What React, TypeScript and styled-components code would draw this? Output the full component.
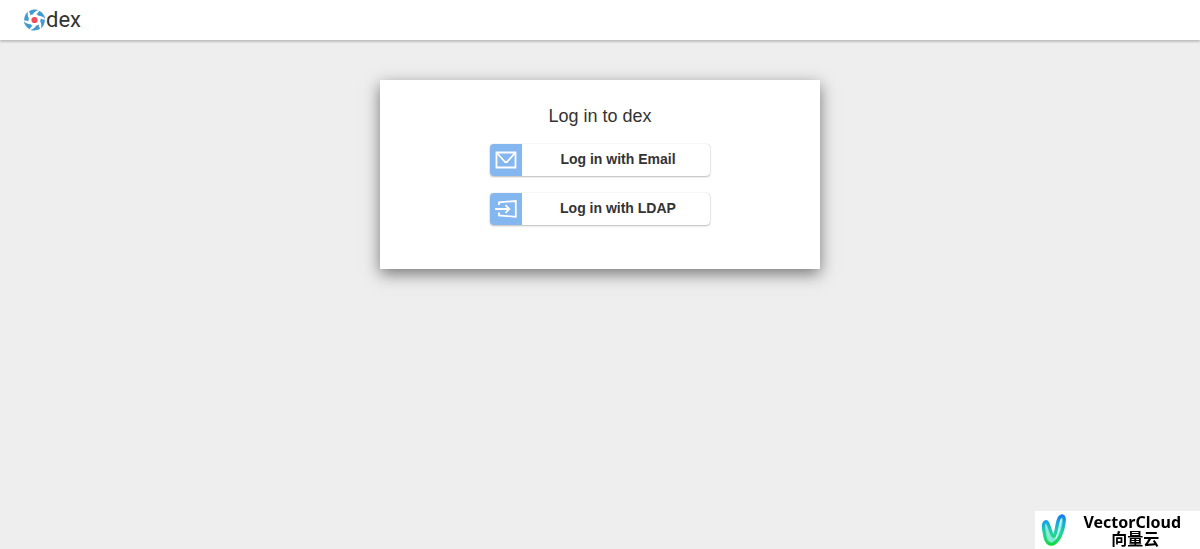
import React from "react";
import styled, { createGlobalStyle } from "styled-components";

const GlobalStyle = createGlobalStyle`
  * { box-sizing: border-box; }
  body {
    margin: 0;
    background: #eeeeee;
    color: #333333;
    font-family: "Liberation Sans", Arial, sans-serif;
  }
`;

const Page = styled.div`
  min-height: 100vh;
  display: flex;
  flex-direction: column;
`;

const Navbar = styled.header`
  height: 40px;
  padding: 0 24px;
  display: flex;
  align-items: center;
  background: #ffffff;
  box-shadow: 0 2px 2px rgba(0, 0, 0, 0.2);
`;

const Brand = styled.a`
  display: flex;
  align-items: center;
  gap: 1px;
  color: #333333;
  font: 400 22px/32px Roboto, sans-serif;
  text-decoration: none;
`;

const Main = styled.main`
  flex: 1;
  padding: 40px 16px;
`;

const Panel = styled.section`
  max-width: 440px;
  margin: 0 auto;
  padding: 24px 32px 44px;
  display: flex;
  flex-direction: column;
  align-items: center;
  background: #ffffff;
  box-shadow: 0 5px 15px rgba(0, 0, 0, 0.5);
`;

const Heading = styled.h1`
  margin: 0 0 16px;
  font-size: 18px;
  line-height: 24px;
  font-weight: 400;
`;

const Connectors = styled.div`
  width: 220px;
  display: flex;
  flex-direction: column;
  gap: 17px;
`;

const ConnectorButton = styled.button`
  height: 32px;
  padding: 0;
  display: flex;
  align-items: stretch;
  overflow: hidden;
  border: 0;
  border-radius: 4px;
  background: #ffffff;
  box-shadow: 0 1px 2px rgba(0, 0, 0, 0.25), 0 0 1px rgba(0, 0, 0, 0.25);
  color: #333333;
  cursor: pointer;
`;

const IconBox = styled.span`
  width: 32px;
  display: flex;
  align-items: center;
  justify-content: center;
  background: #84b6ef;
`;

const Label = styled.span`
  flex: 1;
  padding-left: 4px;
  font: 700 14px/30px "Liberation Sans", Arial, sans-serif;
  text-align: center;
`;

const Watermark = styled.aside`
  position: fixed;
  right: 0;
  bottom: 0;
  height: 38px;
  padding: 0 19px 0 5px;
  display: flex;
  align-items: center;
  gap: 14px;
  background: #ffffff;
  color: #000000;
`;

const WatermarkText = styled.div`
  font: 700 16px/16px "Noto Sans", "Noto Sans CJK SC", sans-serif;
  text-align: center;
`;

const ChineseName = styled.div`
  padding-left: 6px;
  font-family: "Noto Sans CJK SC", sans-serif;
`;

const DexMark = () => (
  <svg width="21" height="22" viewBox="0 0 21 22" aria-hidden="true">
    <g fill="#419bd1">
      {[0, 60, 120, 180, 240, 300].map((angle) => (
        <path
          key={angle}
          transform={`rotate(${angle} 10.5 11)`}
          d="M4.900 2.400C7.700 .2 12 0 14.700 1.100C11.900 2 9.900 3.400 8.800 5.500C7.800 5.600 7 6 6.400 6.500C6.300 4.900 5.800 3.500 4.900 2.400Z"
        />
      ))}
    </g>
    <circle cx="10.5" cy="11" r="3.1" fill="#f04d5c" />
  </svg>
);

const EmailIcon = () => (
  <svg width="22" height="18" viewBox="0 0 22 18" fill="none" stroke="#fff" strokeWidth="1.8" aria-hidden="true">
    <path d="M1.5 1.5H20.5V16.5H1.5Z" />
    <path d="M2 2L9.500 10.500Q11 12 12.500 10.500L20 2" />
  </svg>
);

const LdapIcon = () => (
  <svg width="22" height="18" viewBox="0 0 22 18" fill="none" stroke="#fff" strokeWidth="1.8" aria-hidden="true">
    <path d="M4 5V2.300L20.800 1V16.800L4 15.500V12.500" />
    <path d="M0 9H14M10.500 5.200L14.300 9L10.500 12.800" />
  </svg>
);

const VectorMark = () => (
  <svg width="29" height="36" viewBox="0 0 29 36" fill="none" aria-hidden="true">
    <defs>
      <linearGradient id="vector" x1="0" y1="2" x2="0" y2="34" gradientUnits="userSpaceOnUse">
        <stop offset="0" stopColor="#1672f0" />
        <stop offset="0.25" stopColor="#16a5e4" />
        <stop offset="0.6" stopColor="#20d2a0" />
        <stop offset="1" stopColor="#12dc32" />
      </linearGradient>
    </defs>
    <path
      d="M13 32C9 33 6 30 5 25C4 19 2 12 5 10C8 8 9 15 11 20C12 23 14 26 15 23C17 16 17 8 20 5C23 2 25 5 24 11C23 20 19 29 13 32Z"
      fill="#7be9d0"
      stroke="url(#vector)"
      strokeWidth="3.2"
      strokeLinejoin="round"
    />
    <path d="M21 8C20 15 19 20 16 26" stroke="#c4f5f2" strokeWidth="1.5" strokeLinecap="round" />
    <path d="M6 14C7 20 9 25 11 28" stroke="#9ff0d2" strokeWidth="1" strokeLinecap="round" />
  </svg>
);

const connectors = [
  { name: "Email", Icon: EmailIcon },
  { name: "LDAP", Icon: LdapIcon },
];

export default function App() {
  return (
    <Page>
      <GlobalStyle />
      <Navbar>
        <Brand href="#"><DexMark />dex</Brand>
      </Navbar>
      <Main>
        <Panel>
          <Heading>Log in to dex</Heading>
          <Connectors>
            {connectors.map(({ name, Icon }) => (
              <ConnectorButton key={name} type="button">
                <IconBox><Icon /></IconBox>
                <Label>Log in with {name}</Label>
              </ConnectorButton>
            ))}
          </Connectors>
        </Panel>
      </Main>
      <Watermark>
        <VectorMark />
        <WatermarkText>
          <div>VectorCloud</div>
          <ChineseName lang="zh-CN">向量云</ChineseName>
        </WatermarkText>
      </Watermark>
    </Page>
  );
}
